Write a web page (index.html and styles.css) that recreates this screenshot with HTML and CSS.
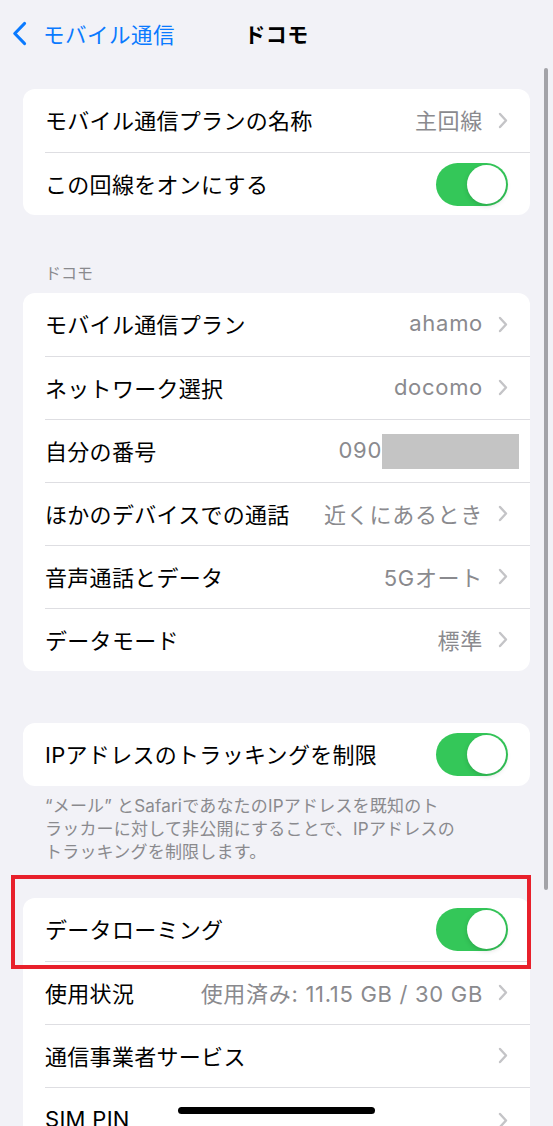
FILE: index.html
```html
<!DOCTYPE html>
<html lang="ja">
<head>
  <meta charset="UTF-8">
  <meta name="viewport" content="width=device-width, initial-scale=1">
  <title>ドコモ</title>
  <link rel="stylesheet" href="styles.css">
</head>
<body>
  <div class="screen">
    <header class="nav">
      <a class="back">
        <svg width="15" height="25" viewBox="0 0 15 25"><path d="M12.5 2.5 L2.8 12.5 L12.5 22.5" fill="none" stroke="#0a7aff" stroke-width="3.2" stroke-linecap="round" stroke-linejoin="round"/></svg>
        <span>モバイル通信</span>
      </a>
      <h1>ドコモ</h1>
      <span></span>
    </header>

    <section class="group group-top">
      <div class="row">
        <span class="label">モバイル通信プランの名称</span>
        <span class="value">主回線</span>
        <svg class="chev" width="10" height="17" viewBox="0 0 10 17"><path d="M2 2 L8 8.5 L2 15" fill="none" stroke="#c4c4c7" stroke-width="2.4" stroke-linecap="round" stroke-linejoin="round"/></svg>
      </div>
      <div class="row">
        <span class="label">この回線をオンにする</span>
        <span class="toggle"><span class="knob"></span></span>
      </div>
    </section>

    <p class="section-head">ドコモ</p>
    <section class="group">
      <div class="row">
        <span class="label">モバイル通信プラン</span>
        <span class="value">ahamo</span>
        <svg class="chev" width="10" height="17" viewBox="0 0 10 17"><path d="M2 2 L8 8.5 L2 15" fill="none" stroke="#c4c4c7" stroke-width="2.4" stroke-linecap="round" stroke-linejoin="round"/></svg>
      </div>
      <div class="row">
        <span class="label">ネットワーク選択</span>
        <span class="value">docomo</span>
        <svg class="chev" width="10" height="17" viewBox="0 0 10 17"><path d="M2 2 L8 8.5 L2 15" fill="none" stroke="#c4c4c7" stroke-width="2.4" stroke-linecap="round" stroke-linejoin="round"/></svg>
      </div>
      <div class="row">
        <span class="label">自分の番号</span>
        <span class="value">090</span>
        <span class="redact"></span>
      </div>
      <div class="row">
        <span class="label">ほかのデバイスでの通話</span>
        <span class="value">近くにあるとき</span>
        <svg class="chev" width="10" height="17" viewBox="0 0 10 17"><path d="M2 2 L8 8.5 L2 15" fill="none" stroke="#c4c4c7" stroke-width="2.4" stroke-linecap="round" stroke-linejoin="round"/></svg>
      </div>
      <div class="row">
        <span class="label">音声通話とデータ</span>
        <span class="value">5Gオート</span>
        <svg class="chev" width="10" height="17" viewBox="0 0 10 17"><path d="M2 2 L8 8.5 L2 15" fill="none" stroke="#c4c4c7" stroke-width="2.4" stroke-linecap="round" stroke-linejoin="round"/></svg>
      </div>
      <div class="row">
        <span class="label">データモード</span>
        <span class="value">標準</span>
        <svg class="chev" width="10" height="17" viewBox="0 0 10 17"><path d="M2 2 L8 8.5 L2 15" fill="none" stroke="#c4c4c7" stroke-width="2.4" stroke-linecap="round" stroke-linejoin="round"/></svg>
      </div>
    </section>

    <section class="group group-ip">
      <div class="row">
        <span class="label">IPアドレスのトラッキングを制限</span>
        <span class="toggle"><span class="knob"></span></span>
      </div>
    </section>
    <p class="foot">“メール” とSafariであなたのIPアドレスを既知のト<br>ラッカーに対して非公開にすることで、IPアドレスの<br>トラッキングを制限します。</p>

    <div class="marked">
      <section class="group">
        <div class="row">
          <span class="label">データローミング</span>
          <span class="toggle"><span class="knob"></span></span>
        </div>
        <div class="row">
          <span class="label">使用状況</span>
          <span class="value">使用済み: 11.15 GB / 30 GB</span>
          <svg class="chev" width="10" height="17" viewBox="0 0 10 17"><path d="M2 2 L8 8.5 L2 15" fill="none" stroke="#c4c4c7" stroke-width="2.4" stroke-linecap="round" stroke-linejoin="round"/></svg>
        </div>
        <div class="row">
          <span class="label">通信事業者サービス</span>
          <span class="value"></span>
          <svg class="chev" width="10" height="17" viewBox="0 0 10 17"><path d="M2 2 L8 8.5 L2 15" fill="none" stroke="#c4c4c7" stroke-width="2.4" stroke-linecap="round" stroke-linejoin="round"/></svg>
        </div>
        <div class="row row-cut">
          <span class="label">SIM PIN</span>
          <span class="value"></span>
          <svg class="chev" width="10" height="17" viewBox="0 0 10 17"><path d="M2 2 L8 8.5 L2 15" fill="none" stroke="#c4c4c7" stroke-width="2.4" stroke-linecap="round" stroke-linejoin="round"/></svg>
        </div>
      </section>
      <div class="highlight"></div>
    </div>

    <div class="scrollbar"></div>
    <div class="home-bar"></div>
  </div>
</body>
</html>
```

FILE: styles.css
```css
html, body {
  margin: 0;
  height: 1126px;
  overflow: hidden;
}
body {
  background: #f2f2f7;
  font-family: "Inter", "Noto Sans CJK JP", sans-serif;
  color: #000;
}
.screen {
  position: relative;
  width: 553px;
  height: 1126px;
  overflow: hidden;
}

/* nav bar */
.nav {
  display: grid;
  grid-template-columns: 1fr auto 1fr;
  align-items: center;
  height: 66px;
}
.back {
  display: flex;
  align-items: center;
  color: #0a7aff;
  font-size: 21.5px;
  letter-spacing: 0.5px;
  padding-left: 12px;
}
.back svg {
  margin-right: 16px;
  margin-top: 1px;
}
.nav h1 {
  margin: 0;
  font-size: 21px;
  font-weight: 700;
  letter-spacing: 0.5px;
}

/* grouped lists */
.group {
  background: #fff;
  margin: 0 23px;
  border-radius: 12px;
  overflow: hidden;
}
.group-top {
  margin-top: 23px;
}
.group-ip {
  margin-top: 52px;
}
.row {
  display: flex;
  align-items: center;
  height: 63px;
  box-sizing: border-box;
  margin-left: 22px;
  padding-right: 22px;
  font-size: 22px;
  letter-spacing: 0.3px;
  padding-bottom: 3px;
}
.row + .row {
  border-top: 1px solid #dedee2;
}
.row-cut {
  padding-bottom: 0;
}
.label {
  flex: 1;
  white-space: nowrap;
}
.value {
  color: #8a8a8e;
  white-space: nowrap;
  letter-spacing: 0.7px;
}
.chev {
  margin-left: 15px;
  margin-top: 2px;
  flex: none;
}
.redact {
  width: 137px;
  height: 35px;
  background: #c4c4c4;
  margin-right: -11px;
  margin-top: 4px;
}

.toggle {
  position: relative;
  width: 72px;
  height: 43px;
  border-radius: 22px;
  background: #34c759;
  flex: none;
  margin-top: 3px;
}
.knob {
  position: absolute;
  top: 2px;
  right: 2px;
  width: 39px;
  height: 39px;
  border-radius: 50%;
  background: #fff;
  box-shadow: 0 2px 5px rgba(0,0,0,0.15);
}

.section-head {
  margin: 48px 45px 10px;
  font-size: 16px;
  line-height: 20px;
  color: #8a8a8e;
}
.foot {
  margin: 9px 45px 0;
  font-size: 17px;
  line-height: 23px;
  letter-spacing: 0.2px;
  color: #8a8a8e;
}

/* annotation */
.marked {
  position: relative;
  margin-top: 34px;
}
.highlight {
  position: absolute;
  top: -23px;
  left: 11px;
  width: 520px;
  height: 94px;
  box-sizing: border-box;
  border: 4px solid #e8202b;
}

.scrollbar {
  position: absolute;
  top: 68px;
  right: 5px;
  width: 4px;
  height: 822px;
  border-radius: 2px;
  background: #a3a3a8;
}
.home-bar {
  position: absolute;
  bottom: 12px;
  left: 178px;
  width: 197px;
  height: 7px;
  border-radius: 4px;
  background: #000;
}
```
